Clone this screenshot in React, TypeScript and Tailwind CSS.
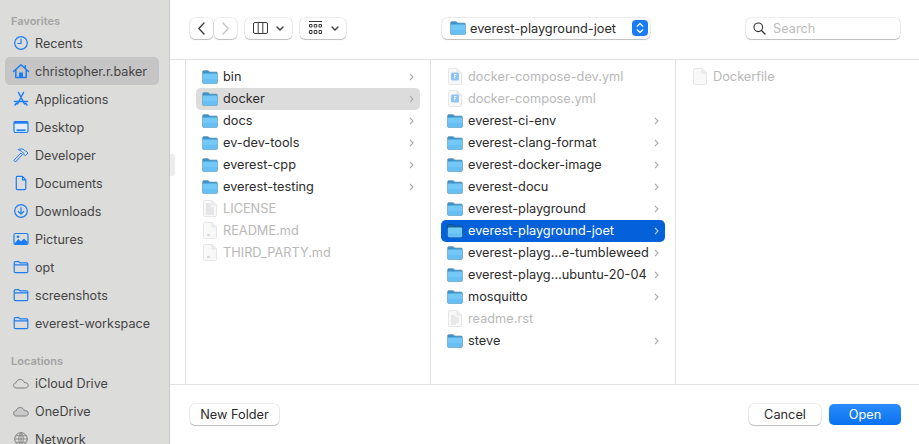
import React from "react";

const FONT = "font-['Inter','Liberation_Sans',sans-serif]";

function Folder({ selected = false }: { selected?: boolean }) {
  return (
    <svg width="16" height="14" viewBox="0 0 16 14" className="shrink-0">
      <path d="M0.5 2C0.5 1 1.2 .5 2 .5H5.6C6.3 .5 6.6 .8 7 1.3L7.6 2H14C15 2 15.5 2.6 15.5 3.5V12C15.5 13 15 13.5 14 13.5H2C1 13.5 .5 13 .5 12Z" fill={selected ? "#17629f" : "#3a94c9"} stroke={selected ? "#0b4f96" : "#7f9fb5"} strokeWidth=".7" />
      <path d="M.8 4.4C.8 3.8 1.2 3.5 1.8 3.5H14.2C14.8 3.5 15.2 3.8 15.2 4.4V12C15.2 12.8 14.8 13.2 14 13.2H2C1.2 13.2 .8 12.8 .8 12Z" fill="#72c9f8" />
      <path d="M.8 9H15.2V12C15.2 12.8 14.8 13.2 14 13.2H2C1.2 13.2 .8 12.8 .8 12Z" fill="#64bdf1" opacity=".8" />
    </svg>
  );
}

function Doc({ kind }: { kind: "plain" | "lines" | "license" | "yml" | "md" }) {
  return (
    <svg width="14" height="17" viewBox="0 0 14 17" className="shrink-0">
      <path d="M.5 1.5C.5 .9.9.5 1.5.5H9L13.5 5V15.5C13.5 16.1 13.1 16.5 12.5 16.5H1.5C.9 16.5.5 16.1.5 15.5Z" fill="#f8f8f8" stroke="#e6e6e6" />
      <path d="M9 .5V5H13.5" fill="#ededed" stroke="#e6e6e6" />
      {kind === "lines" && <path d="M3 6H7M3 8H11M3 10H11M3 12H11M3 14H8" stroke="#cfcfcf" strokeWidth=".8" />}
      {kind === "license" && <path d="M3 4H8M3 6H8M3 8H11M3 10H11M3 12H11M3 14H11" stroke="#d4d4d4" strokeWidth="1" />}
      {kind === "md" && <path d="M4 13H7" stroke="#bdbdbd" strokeWidth="1" />}
      {kind === "yml" && (
        <>
          <rect x="3" y="4.5" width="8" height="8" rx="1.5" fill="#8fc4f5" />
          <path d="M6 6.5H8.5M6.5 8.5H8M6.5 6.5V10.5" stroke="#f2f8ff" strokeWidth=".9" fill="none" />
        </>
      )}
    </svg>
  );
}

function Chevron({ white = false }: { white?: boolean }) {
  return (
    <svg width="5" height="8" viewBox="0 0 5 8" className="shrink-0">
      <path d="M1 .8L4 4L1 7.2" fill="none" stroke={white ? "#b9d4f3" : "#a8a8a8"} strokeWidth="1.1" />
    </svg>
  );
}

type Item = { name: string; icon: "folder" | "plain" | "lines" | "license" | "yml" | "md"; state?: "gray" | "blue" };

function Row({ item }: { item: Item }) {
  const folder = item.icon === "folder";
  const bg = item.state === "gray" ? "bg-[#dcdcdc]" : item.state === "blue" ? "bg-[#0561d9]" : "";
  const color = item.state === "blue" ? "text-white" : folder ? "text-[#2b2b2b]" : "text-[#b8b8b8]";
  return (
    <div className={`flex h-[22px] items-center rounded-[5px] px-[6px] pb-[1px] ${bg}`}>
      <div className="flex w-[16px] justify-center">
        {folder ? <Folder selected={item.state === "blue"} /> : <Doc kind={item.icon as "plain"} />}
      </div>
      <span className={`ml-[5px] mt-[2px] flex-1 whitespace-nowrap text-[12.75px] leading-none ${color}`}>{item.name}</span>
      {folder && <Chevron white={item.state === "blue"} />}
    </div>
  );
}

const col1: Item[] = [
  { name: "bin", icon: "folder" },
  { name: "docker", icon: "folder", state: "gray" },
  { name: "docs", icon: "folder" },
  { name: "ev-dev-tools", icon: "folder" },
  { name: "everest-cpp", icon: "folder" },
  { name: "everest-testing", icon: "folder" },
  { name: "LICENSE", icon: "license" },
  { name: "README.md", icon: "md" },
  { name: "THIRD_PARTY.md", icon: "md" },
];
const col2: Item[] = [
  { name: "docker-compose-dev.yml", icon: "yml" },
  { name: "docker-compose.yml", icon: "yml" },
  { name: "everest-ci-env", icon: "folder" },
  { name: "everest-clang-format", icon: "folder" },
  { name: "everest-docker-image", icon: "folder" },
  { name: "everest-docu", icon: "folder" },
  { name: "everest-playground", icon: "folder" },
  { name: "everest-playground-joet", icon: "folder", state: "blue" },
  { name: "everest-playg…e-tumbleweed", icon: "folder" },
  { name: "everest-playg…ubuntu-20-04", icon: "folder" },
  { name: "mosquitto", icon: "folder" },
  { name: "readme.rst", icon: "lines" },
  { name: "steve", icon: "folder" },
];

const B = "#1c7cf2";
const sw = { fill: "none", stroke: B, strokeWidth: 1.2, strokeLinecap: "round", strokeLinejoin: "round" } as const;

const sideIcons: Record<string, React.ReactNode> = {
  recents: (<><circle cx="9" cy="9" r="6.3" {...sw} /><path d="M9 5V9.5H5.8" {...sw} /></>),
  home: (<><path d="M1.5 9.5L9 2.8L16.5 9.5M13.2 3.8V6.5M3.8 8.5V15.4H14.2V8.5" {...sw} strokeWidth={1.5} /><path d="M7 15.5V10.5H11V15.5Z" fill={B} /></>),
  apps: (<path d="M6.5 2.5L12.5 14M11.5 2.5L5.5 14M2.5 11.5H15.5M3 15L4.5 13.3M15 15L13.5 13.3" {...sw} strokeWidth={1.5} />),
  desktop: (<><rect x="2" y="3.5" width="14" height="11" rx="1.5" {...sw} fill="#e4eefb" /><rect x="2" y="3.5" width="14" height="2.2" fill={B} /><path d="M4.5 12.3H13.5" {...sw} strokeLinecap="butt" strokeWidth={1.8} /></>),
  developer: (<path d="M2.2 14.6L3.5 16L10.4 8.6L9.2 7.3ZM6.5 3.6C8.5 2.4 11 2.6 12.5 4.2L14 5.7L14.4 5.4L16 7L13.3 9.8L11.7 8.2L12.1 7.7L11.2 7C10.4 6 8.8 4.6 6.5 3.6Z" {...sw} strokeWidth={1} />),
  documents: (<path d="M4.3 3.2C4.3 2.7 4.7 2.4 5.2 2.4H10.5L13.8 5.9V14.5C13.8 15.2 13.4 15.6 12.7 15.6H5.4C4.7 15.6 4.3 15.2 4.3 14.5ZM10.5 2.4V5.9H13.8" {...sw} />),
  downloads: (<><circle cx="9" cy="9" r="6.3" {...sw} /><path d="M9 5.5V12M6.3 9.5L9 12.2L11.7 9.5" {...sw} /></>),
  pictures: (<><rect x="2" y="3.5" width="14" height="11" rx="1.5" {...sw} /><path d="M2.5 13.5L6.5 9L9 11.5L12 8.5L15.5 12V14H2.5Z" fill={B} /><circle cx="6" cy="6.8" r="1.3" fill={B} /></>),
  folder: (<path d="M2.2 5C2.2 4 2.7 3.6 3.5 3.6H6.8L8 4.8H14.5C15.3 4.8 15.8 5.3 15.8 6V13.5C15.8 14.2 15.3 14.7 14.5 14.7H3.5C2.7 14.7 2.2 14.2 2.2 13.5ZM2.2 6.8H15.8" {...sw} />),
  cloud: (<path d="M4.6 14C2.9 14 1.6 12.9 1.6 11.3C1.6 9.8 2.7 8.8 4.1 8.7C4.6 6.7 6.2 5.5 8.2 5.5C10.2 5.5 11.7 6.8 12.2 8.5C14.4 8.4 16.3 9.5 16.3 11.3C16.3 12.9 15 14 13.3 14Z" fill="#c9c9c9" stroke="#7d7d7d" strokeWidth="1" />),
  cloudOpen: (<path d="M4.6 14C2.9 14 1.6 12.9 1.6 11.3C1.6 9.8 2.7 8.8 4.1 8.7C4.6 6.7 6.2 5.5 8.2 5.5C10.2 5.5 11.7 6.8 12.2 8.5C14.4 8.4 16.3 9.5 16.3 11.3C16.3 12.9 15 14 13.3 14Z" fill="none" stroke="#7d7d7d" strokeWidth="1" />),
  globe: (<><circle cx="9" cy="9" r="6.3" fill="none" stroke="#7d7d7d" /><path d="M2.7 9H15.3M9 2.7V15.3M3.8 5.7H14.2M3.8 12.3H14.2M9 2.7C6 5 6 13 9 15.3M9 2.7C12 5 12 13 9 15.3" fill="none" stroke="#7d7d7d" strokeWidth=".8" /></>),
};

function SideRow({ icon, label, active = false }: { icon: string; label: string; active?: boolean }) {
  return (
    <div className={`flex h-[28px] items-center rounded-[5px] pl-[7px] ${active ? "bg-[#c5c5c5]" : ""}`}>
      <svg width="18" height="18" viewBox="0 0 18 18" className="shrink-0">{sideIcons[icon]}</svg>
      <span className="ml-[5px] mt-[2px] whitespace-nowrap text-[12.6px] leading-none text-[#444444]">{label}</span>
    </div>
  );
}

function Btn({ className = "", children }: { className?: string; children: React.ReactNode }) {
  return (
    <div className={`flex h-[21px] items-center justify-center rounded-[5px] bg-white shadow-[0_0_0_0.5px_rgba(0,0,0,0.14),0_1px_1px_rgba(0,0,0,0.2)] ${className}`}>
      {children}
    </div>
  );
}

export default function App() {
  return (
    <div className={`flex h-[444px] w-[919px] overflow-hidden bg-white ${FONT}`}>
      <aside className="relative h-full w-[170px] shrink-0 overflow-hidden border-r border-[#c8c8c8] bg-[#dcdcdb] pl-[5px] pr-[10px] pt-[13px]">
        <div className="flex h-4 items-center pl-[6px] text-[11px] font-semibold leading-none text-[#a3a3a3]">Favorites</div>
        <SideRow icon="recents" label="Recents" />
        <SideRow icon="home" label="christopher.r.baker" active />
        <SideRow icon="apps" label="Applications" />
        <SideRow icon="desktop" label="Desktop" />
        <SideRow icon="developer" label="Developer" />
        <SideRow icon="documents" label="Documents" />
        <SideRow icon="downloads" label="Downloads" />
        <SideRow icon="pictures" label="Pictures" />
        <SideRow icon="folder" label="opt" />
        <SideRow icon="folder" label="screenshots" />
        <SideRow icon="folder" label="everest-workspace" />
        <div className="mt-4 flex h-4 items-center pl-[6px] text-[11px] font-semibold leading-none text-[#a3a3a3]">Locations</div>
        <SideRow icon="cloudOpen" label="iCloud Drive" />
        <SideRow icon="cloud" label="OneDrive" />
        <SideRow icon="globe" label="Network" />
      </aside>

      <main className="relative flex min-w-0 flex-1 flex-col">
        <div className="absolute left-0 top-[154px] h-[22px] w-[5px] rounded-r-[3px] bg-[#ececec]" />
        <header className="flex h-[60px] shrink-0 items-center border-b border-[#e2e2e2] pb-[3px] pl-[20px]">
          <Btn className="w-[23px]">
            <svg width="9" height="13" viewBox="0 0 9 13"><path d="M7 1L1.8 6.5L7 12" fill="none" stroke="#3a3a3a" strokeWidth="1.3" strokeLinecap="round" strokeLinejoin="round" /></svg>
          </Btn>
          <Btn className="ml-[1px] w-[23px]">
            <svg width="9" height="13" viewBox="0 0 9 13"><path d="M2 1L7.2 6.5L2 12" fill="none" stroke="#c2c2c2" strokeWidth="1.3" strokeLinecap="round" strokeLinejoin="round" /></svg>
          </Btn>
          <Btn className="ml-[8px] w-[47px] gap-[8px]">
            <svg width="15" height="12" viewBox="0 0 15 12"><rect x=".5" y=".5" width="14" height="11" rx="1.5" fill="none" stroke="#3a3a3a" /><path d="M5.2 .5V11.5M9.8 .5V11.5" stroke="#3a3a3a" /></svg>
            <svg width="8" height="5" viewBox="0 0 8 5"><path d="M1 1L4 4L7 1" fill="none" stroke="#3a3a3a" strokeWidth="1.4" strokeLinecap="round" strokeLinejoin="round" /></svg>
          </Btn>
          <Btn className="ml-[8px] w-[46px] gap-[8px]">
            <svg width="15" height="14" viewBox="0 0 15 14">
              <path d="M1 .5H14" stroke="#3a3a3a" />
              <path d="M1.5 3.5H4V6H1.5ZM6.2 3.5H8.8V6H6.2ZM11 3.5H13.5V6H11ZM1.5 9.5H4V12.5H1.5ZM6.2 9.5H8.8V12.5H6.2ZM11 9.5H13.5V12.5H11Z" fill="none" stroke="#3a3a3a" strokeWidth="1" />
            </svg>
            <svg width="8" height="5" viewBox="0 0 8 5"><path d="M1 1L4 4L7 1" fill="none" stroke="#3a3a3a" strokeWidth="1.4" strokeLinecap="round" strokeLinejoin="round" /></svg>
          </Btn>
          <Btn className="ml-[96px] w-[208px] justify-start pl-[8px] pr-[2px]">
            <Folder />
            <span className="ml-[4px] mt-[2px] flex-1 whitespace-nowrap text-[12.75px] leading-none text-[#2b2b2b]">everest-playground-joet</span>
            <div className="flex h-[16px] w-[16px] items-center justify-center rounded-[4px] bg-[#1a7cf5]">
              <svg width="8" height="12" viewBox="0 0 8 12"><path d="M1.2 4.2L4 1.5L6.8 4.2M1.2 7.8L4 10.5L6.8 7.8" fill="none" stroke="#fff" strokeWidth="1.2" strokeLinecap="round" strokeLinejoin="round" /></svg>
            </div>
          </Btn>
          <Btn className="ml-[96px] w-[154px] justify-start pl-[7px]">
            <svg width="13" height="13" viewBox="0 0 13 13"><circle cx="5.3" cy="5.3" r="4.3" fill="none" stroke="#333" strokeWidth="1.1" /><path d="M8.5 8.5L12 12" stroke="#333" strokeWidth="1.3" strokeLinecap="round" /></svg>
            <span className="ml-[7px] mt-[2px] text-[12.75px] leading-none text-[#bcbcbc]">Search</span>
          </Btn>
        </header>

        <section className="flex h-[325px] shrink-0 border-b border-[#e2e2e2]">
          <div className="w-[16px] shrink-0 border-r border-[#e2e2e2]" />
          <div className="w-[245px] shrink-0 border-r border-[#e2e2e2] px-[10px] pt-[6px]">
            {col1.map((i) => <Row key={i.name} item={i} />)}
          </div>
          <div className="w-[245px] shrink-0 border-r border-[#e2e2e2] px-[10px] pt-[6px]">
            {col2.map((i) => <Row key={i.name} item={i} />)}
          </div>
          <div className="flex-1 pl-[10px] pt-[6px]">
            <Row item={{ name: "Dockerfile", icon: "plain" }} />
          </div>
        </section>

        <footer className="flex flex-1 items-center justify-between pl-[20px] pr-[18px]">
          <Btn className="w-[89px] pt-[1px] text-[12.75px] leading-none text-[#2b2b2b]">New Folder</Btn>
          <div className="flex gap-[8px]">
            <Btn className="w-[72px] pt-[1px] text-[12.75px] leading-none text-[#2b2b2b]">Cancel</Btn>
            <div className="flex h-[21px] w-[72px] items-center justify-center rounded-[5px] bg-[linear-gradient(#2a8cfb,#0a72f0)] pt-[1px] text-[12.75px] leading-none text-white">Open</div>
          </div>
        </footer>
      </main>
    </div>
  );
}
